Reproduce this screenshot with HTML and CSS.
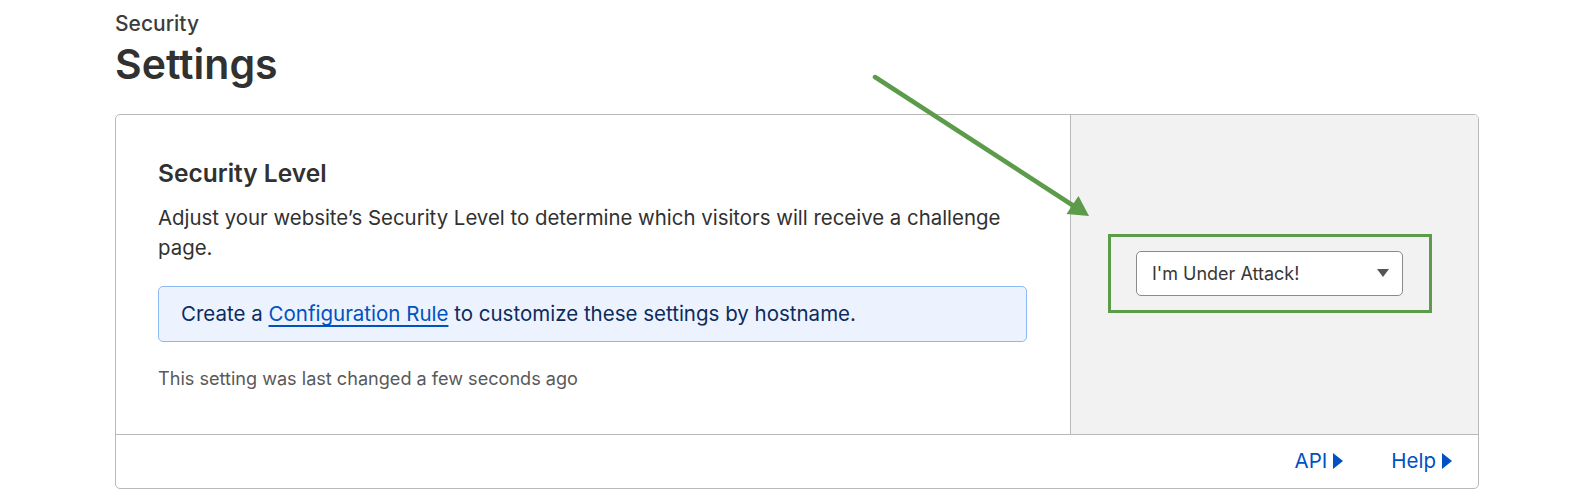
FILE: index.html
```html
<!DOCTYPE html>
<html lang="en">
<head>
<meta charset="utf-8">
<title>Security Settings</title>
<link rel="stylesheet" href="styles.css">
</head>
<body>
<main class="page">
  <header class="page-header">
    <div class="eyebrow">Security</div>
    <h1 class="page-title">Settings</h1>
  </header>

  <section class="card">
    <div class="card-body">
      <div class="card-main">
        <h2 class="card-title">Security Level</h2>
        <p class="card-desc">Adjust your website’s Security Level to determine which visitors will receive a challenge page.</p>
        <div class="info-banner">Create a <a class="link" href="#">Configuration Rule</a> to customize these settings by hostname.</div>
        <p class="card-note">This setting was last changed a few seconds ago</p>
      </div>
      <div class="card-side">
        <div class="highlight">
          <div class="select">
            <span class="select-value">I'm Under Attack!</span>
            <span class="select-caret"></span>
          </div>
        </div>
      </div>
    </div>
    <footer class="card-footer">
      <a class="footer-link" href="#">API<span class="tri"></span></a>
      <a class="footer-link" href="#">Help<span class="tri"></span></a>
    </footer>
  </section>
</main>

<svg class="annotation" width="1584" height="504" viewBox="0 0 1584 504" aria-hidden="true">
  <line x1="875" y1="77" x2="1073" y2="205.5" stroke="#5b9b49" stroke-width="4.5" stroke-linecap="round"/>
  <polygon points="1089,216 1066.5,214 1078.5,196" fill="#5b9b49"/>
</svg>
</body>
</html>
```
FILE: styles.css
```css
* { box-sizing: border-box; }

html, body {
  margin: 0;
  background: #ffffff;
}

body {
  font-family: "Inter", "Noto Sans", sans-serif;
  color: #313131;
  width: 1584px;
  height: 504px;
  overflow: hidden;
  position: relative;
}

.page {
  padding: 11px 0 0 115px;
  width: 1584px;
}

.page-header {
  display: flex;
  flex-direction: column;
}

.eyebrow {
  font-size: 21px;
  font-weight: 500;
  line-height: 26px;
  color: #3d3d3d;
}

.page-title {
  margin: 3px 0 0;
  font-size: 41px;
  font-weight: 600;
  line-height: 48px;
  color: #313131;
}

.card {
  margin-top: 26px;
  width: 1364px;
  border: 1px solid #b9b9b9;
  border-radius: 5px;
  overflow: hidden;
  background: #ffffff;
}

.card-body {
  display: grid;
  grid-template-columns: 954px 1fr;
}

.card-main {
  padding: 43px 43px 43px 42px;
  display: flex;
  flex-direction: column;
}

.card-title {
  margin: 0;
  font-size: 24.5px;
  font-weight: 600;
  line-height: 30px;
  color: #313131;
}

.card-desc {
  margin: 15px 0 0;
  font-size: 20.4px;
  line-height: 30px;
  color: #313131;
}

.info-banner {
  margin-top: 23px;
  padding: 12px 20px 12px 22px;
  background: #ecf3fe;
  border: 1px solid #8dbaf5;
  border-radius: 5px;
  font-size: 20.5px;
  line-height: 30px;
  color: #0d2b5e;
}

.link {
  color: #0051c3;
  text-decoration: underline;
  text-decoration-thickness: 2px;
  text-underline-offset: 4px;
}

.card-note {
  margin: 23px 0 0;
  font-size: 18.1px;
  line-height: 26px;
  color: #595959;
}

.card-side {
  background: #f2f2f2;
  border-left: 1px solid #b9b9b9;
  display: flex;
  align-items: center;
  justify-content: center;
}

.highlight {
  margin-right: 9px;
  margin-top: -3px;
  border: 3px solid #5b9b49;
  padding: 14px 26px 14px 25px;
}

.select {
  width: 267px;
  height: 45px;
  background: #ffffff;
  border: 1px solid #8a8a8a;
  border-radius: 5px;
  display: flex;
  align-items: center;
  justify-content: space-between;
  padding: 0 13px 0 15px;
}

.select-value {
  font-size: 18px;
  color: #363636;
}

.select-caret {
  width: 0;
  height: 0;
  border-left: 6px solid transparent;
  border-right: 6px solid transparent;
  border-top: 8px solid #555555;
}

.card-footer {
  border-top: 1px solid #b9b9b9;
  display: flex;
  justify-content: flex-end;
  gap: 48px;
  padding: 14px 26px 15px 0;
}

.footer-link {
  display: flex;
  align-items: center;
  gap: 6px;
  font-size: 20.5px;
  line-height: 24px;
  color: #0051c3;
  text-decoration: none;
}

.tri {
  width: 0;
  height: 0;
  border-top: 8px solid transparent;
  border-bottom: 8px solid transparent;
  border-left: 10px solid #0051c3;
}

.annotation {
  position: absolute;
  top: 0;
  left: 0;
  pointer-events: none;
}
```
